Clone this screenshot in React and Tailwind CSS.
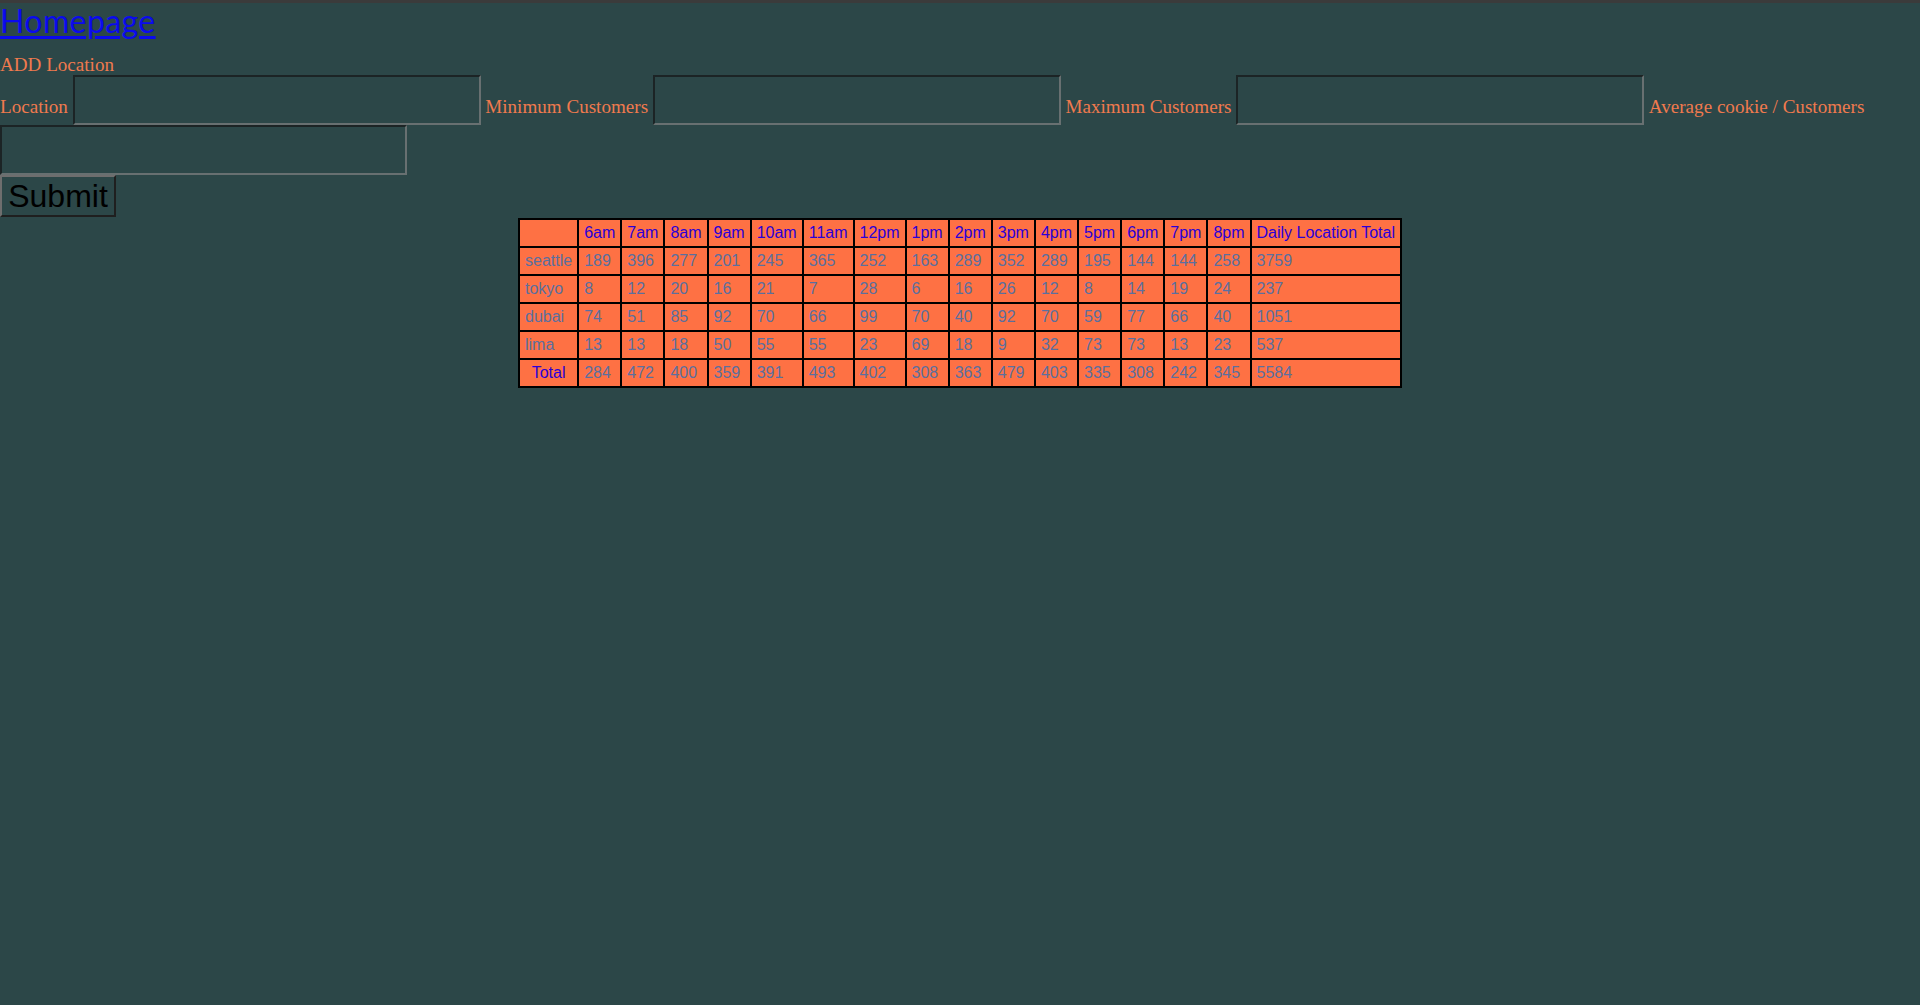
import React from 'react';

const hours = ['6am', '7am', '8am', '9am', '10am', '11am', '12pm', '1pm', '2pm', '3pm', '4pm', '5pm', '6pm', '7pm', '8pm'];

const stores = [
  { name: 'seattle', sales: [189, 396, 277, 201, 245, 365, 252, 163, 289, 352, 289, 195, 144, 144, 258], total: 3759 },
  { name: 'tokyo', sales: [8, 12, 20, 16, 21, 7, 28, 6, 16, 26, 12, 8, 14, 19, 24], total: 237 },
  { name: 'dubai', sales: [74, 51, 85, 92, 70, 66, 99, 70, 40, 92, 70, 59, 77, 66, 40], total: 1051 },
  { name: 'lima', sales: [13, 13, 18, 50, 55, 55, 23, 69, 18, 9, 32, 73, 73, 13, 23], total: 537 },
];

const hourlyTotals = [284, 472, 400, 359, 391, 493, 402, 308, 363, 479, 403, 335, 308, 242, 345];

const thClass = 'border-2 border-black px-[5px] py-[4px] font-normal text-center text-[#2a00d8]';
const tdClass = 'border-2 border-black px-[5px] py-[4px] text-left text-[#5a6f9f]';
const inputClass = 'h-[50px] w-[408px] border-2 border-t-[#1c2425] border-l-[#1c2425] border-b-[#687071] border-r-[#687071] bg-transparent outline-none';
const labelClass = 'mb-[8px] mx-[4.7px] leading-[21px]';

export default function App() {
  return (
    <div className="min-h-screen bg-[#2c4748] border-t-[3px] border-[#3b3b3b] font-['Liberation_Serif',serif] text-[19.1px] text-[#f07a4e]">
      <a href="#" className="block h-[37px] font-['Lato',sans-serif] text-[32px] leading-[35px] tracking-[0.4px] text-[#0a0aee] underline decoration-[3px] underline-offset-[3px]">
        Homepage
      </a>
      <div className="mt-[14px] leading-[21px]">ADD Location</div>
      <form className="flex flex-wrap items-end" onSubmit={(e) => e.preventDefault()}>
        <span className="mb-[8px] mr-[4.7px] leading-[21px]">Location</span>
        <input type="text" className={inputClass} />
        <span className={labelClass}>Minimum Customers</span>
        <input type="text" className={inputClass} />
        <span className={labelClass}>Maximum Customers</span>
        <input type="text" className={inputClass} />
        <span className={labelClass}>Average cookie / Customers</span>
        <input type="text" className="h-[50px] w-[407px] border-2 border-t-[#1c2425] border-l-[#1c2425] border-b-[#687071] border-r-[#687071] bg-transparent outline-none" />
        <div className="basis-full">
          <button type="submit" className="block h-[42px] w-[116px] border-2 border-t-[#6e6e6e] border-l-[#6e6e6e] border-b-[#1f1f1f] border-r-[#1f1f1f] bg-transparent font-['Liberation_Sans',Arial,sans-serif] text-[32px] leading-[36px] text-black">
            Submit
          </button>
        </div>
      </form>
      <table className="mx-auto mt-[1px] border-collapse border-2 border-black bg-[#fe7144] font-['Liberation_Sans',Arial,sans-serif] text-[16px] leading-[18px]">
        <thead>
          <tr>
            <th className={thClass}></th>
            {hours.map((h) => (
              <th key={h} className={thClass}>{h}</th>
            ))}
            <th className={thClass}>Daily Location Total</th>
          </tr>
        </thead>
        <tbody>
          {stores.map((store) => (
            <tr key={store.name}>
              <td className={tdClass}>{store.name}</td>
              {store.sales.map((n, i) => (
                <td key={i} className={tdClass}>{n}</td>
              ))}
              <td className={tdClass}>{store.total}</td>
            </tr>
          ))}
          <tr>
            <th className={thClass}>Total</th>
            {hourlyTotals.map((n, i) => (
              <td key={i} className={tdClass}>{n}</td>
            ))}
            <td className={tdClass}>5584</td>
          </tr>
        </tbody>
      </table>
    </div>
  );
}
